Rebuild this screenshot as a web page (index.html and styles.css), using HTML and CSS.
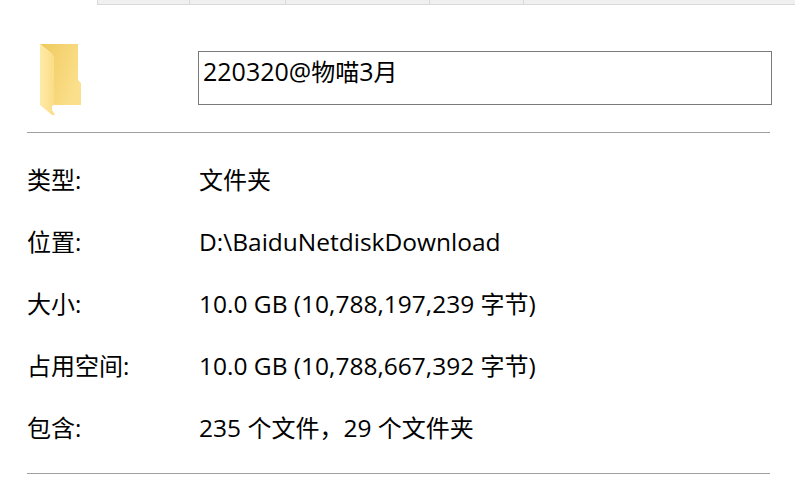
FILE: index.html
```html
<!DOCTYPE html>
<html lang="zh-CN">
<head>
<meta charset="utf-8">
<title>220320@物喵3月 属性</title>
<link rel="stylesheet" href="styles.css">
</head>
<body>
<div class="tabs">
  <div class="tab-spacer"></div>
  <div class="tab tab-a"></div>
  <div class="tab tab-b"></div>
  <div class="tab tab-c"></div>
  <div class="tab tab-d"></div>
  <div class="tab tab-e"></div>
</div>
<main class="panel">
  <div class="head">
    <div class="icon-cell">
      <svg class="folder" width="44" height="76" viewBox="0 0 44 76" aria-hidden="true">
        <defs>
          <linearGradient id="back" x1="0" y1="0" x2="1" y2="0.5">
            <stop offset="0" stop-color="#efc95c"/>
            <stop offset="1" stop-color="#fbdf8c"/>
          </linearGradient>
          <linearGradient id="front" x1="0" y1="0" x2="1" y2="0">
            <stop offset="0" stop-color="#feeaa8"/>
            <stop offset="1" stop-color="#fbdc85"/>
          </linearGradient>
        </defs>
        <path d="M0 0H38V36L41 39V61H12V10Z" fill="url(#back)"/>
        <path d="M0 0L14 12V61L12 62V66L15 71H12L0 61Z" fill="url(#front)"/>
      </svg>
    </div>
    <div class="name-box"><span class="lat">220320@</span>物喵<span class="lat">3</span>月</div>
  </div>
  <hr class="rule">
  <dl class="rows">
    <div class="row"><dt>类型:</dt><dd>文件夹</dd></div>
    <div class="row"><dt>位置:</dt><dd><span class="lat">D:\BaiduNetdiskDownload</span></dd></div>
    <div class="row"><dt>大小:</dt><dd><span class="lat">10.0 GB (10,788,197,239 </span>字节<span class="lat">)</span></dd></div>
    <div class="row"><dt>占用空间:</dt><dd><span class="lat">10.0 GB (10,788,667,392 </span>字节<span class="lat">)</span></dd></div>
    <div class="row"><dt>包含:</dt><dd><span class="lat">235 </span>个文件，<span class="lat">29 </span>个文件夹</dd></div>
  </dl>
  <hr class="rule rule-end">
</main>
</body>
</html>
```
FILE: styles.css
```css
html, body {
  margin: 0;
  padding: 0;
  background: #fff;
}
body {
  width: 795px;
  height: 484px;
  overflow: hidden;
  color: #000;
  font-family: "Open Sans", "Noto Sans CJK SC", sans-serif;
  font-size: 24px;
}
.lat { font-size: 24.5px; }
.tabs {
  display: flex;
  height: 5px;
}
.tab-spacer { width: 97px; }
.tab {
  background: #f0f0f0;
  border-left: 1px solid #d9d9d9;
  border-bottom: 1px solid #d9d9d9;
  box-sizing: border-box;
}
.tab-a { width: 92px; }
.tab-b { width: 96px; }
.tab-c { width: 144px; }
.tab-d { width: 94px; }
.tab-e { flex: 1; }
.panel {
  padding: 0 25px 0 27px;
}
.head {
  display: flex;
  height: 127px;
}
.icon-cell {
  flex: none;
  width: 171px;
  padding: 39px 0 0 13px;
  box-sizing: border-box;
}
.folder { display: block; }
.name-box {
  flex: none;
  margin-top: 46px;
  width: 574px;
  height: 54px;
  box-sizing: border-box;
  border: 1px solid #7a7a7a;
  padding: 0 4px;
  line-height: 38px;
}
.name-box .lat { font-size: 25px; }
.rule {
  margin: 0;
  border: 0;
  border-top: 1px solid #a0a0a0;
}
.rows {
  margin: 16px 0 0;
}
.row {
  display: flex;
  height: 62px;
  align-items: center;
  line-height: 30px;
}
.row dt { width: 172px; }
.row dd { margin: 0; }
.rule-end { margin-top: 14px; }
```
